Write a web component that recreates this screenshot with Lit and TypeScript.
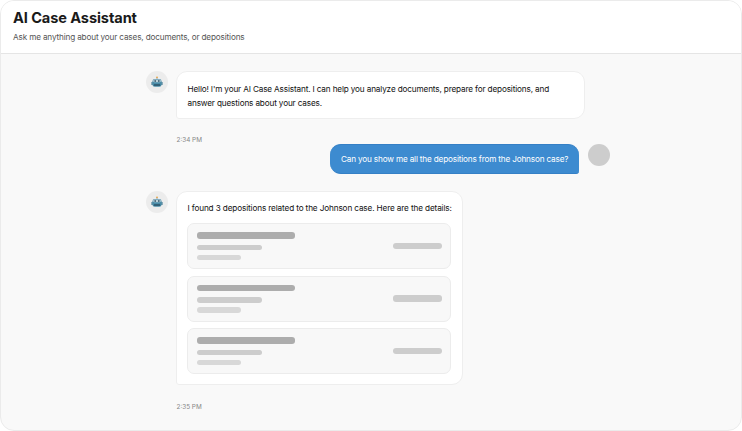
import { LitElement, html, css } from "lit";
import { customElement } from "lit/decorators.js";

@customElement("app-root")
export class AppRoot extends LitElement {
  static styles = css`
    :host { display: block; width: 742px; height: 431px; background: #fff; font-family: Inter, "Liberation Sans", sans-serif; }
    .frame { box-sizing: border-box; width: 742px; height: 431px; border: 1px solid #ebebeb; border-radius: 14px; overflow: hidden; display: flex; flex-direction: column; background: #f9f9f9; }
    .head { box-sizing: border-box; height: 53px; flex: none; background: #fff; border-bottom: 1px solid #e5e5e5; padding: 8px 12px 0; }
    h1 { margin: 0; font-size: 14.6px; line-height: 18px; font-weight: 700; letter-spacing: -0.1px; color: #1a1a1a; }
    .sub { margin: 5px 0 0; font-size: 8.2px; letter-spacing: -0.16px; line-height: 11px; color: #555; }
    .chat { flex: 1; display: flex; flex-direction: column; padding: 17px 131px 0 145px; }
    .row { display: flex; gap: 8px; align-items: flex-start; }
    .row.user { justify-content: flex-end; gap: 9px; }
    .row.next { margin-top: 17px; }
    .av { width: 22px; height: 22px; border-radius: 50%; background: #ececec; flex: none; display: flex; align-items: center; justify-content: center; }
    .av.u { background: #cdcdcd; }
    .av svg { display: block; width: 12px; height: 12px; }
    .bubble { box-sizing: border-box; background: #fff; border: 1px solid #eeeeee; border-radius: 11px 11px 11px 3px; padding: 11px 11px 11px 10px; font-size: 8.2px; letter-spacing: -0.15px; line-height: 13.5px; color: #111; }
    .b1 { width: 409px; height: 48px; padding-left: 10.5px; }
    .b2 { width: 287px; height: 194px; }
    .me { box-sizing: border-box; width: 249px; height: 30px; background: #3d8bd0; color: #fff; border-top: 1px solid #3580c6; border-bottom: 1px solid #3580c6; border-radius: 11px 11px 3px 11px; padding: 0 11px; font-size: 8.2px; letter-spacing: -0.17px; line-height: 28px; white-space: nowrap; }
    .time { margin: 17px 0 0 30.5px; font-size: 6.4px; line-height: 8px; color: #888; }
    .time.last { margin-top: 18px; }
    .lead { line-height: 13px; margin: -1px 0 8px 0.5px; letter-spacing: -0.13px; white-space: nowrap; }
    .cards { display: flex; flex-direction: column; gap: 6.5px; }
    .card { box-sizing: border-box; height: 46px; border: 1px solid #ececec; border-radius: 7px; background: #f8f8f8; padding: 8px 8px 0 9px; display: flex; justify-content: space-between; align-items: center; }
    .lines { display: flex; flex-direction: column; align-self: flex-start; }
    .l { border-radius: 3px; }
    .l1 { width: 98px; height: 6.5px; background: #adadad; }
    .l2 { width: 65px; height: 5.5px; background: #cdcdcd; margin-top: 6px; }
    .l3 { width: 43.5px; height: 5.5px; background: #d8d8d8; margin-top: 4.5px; }
    .r { width: 49px; height: 6.5px; background: #cdcdcd; margin-top: -8px; }
  `;

  robot() {
    return html`<svg viewBox="0 0 12 12" aria-hidden="true">
      <circle cx="6" cy="1.3" r="0.9" fill="#e8a33d"></circle>
      <rect x="5.6" y="1.8" width="0.8" height="1.6" fill="#8a9aa5"></rect>
      <rect x="0.4" y="6" width="1.4" height="3" rx="0.5" fill="#4b7f96"></rect>
      <rect x="10.2" y="6" width="1.4" height="3" rx="0.5" fill="#4b7f96"></rect>
      <rect x="1.4" y="3" width="9.2" height="7.8" rx="2.4" fill="#4a8ca8"></rect>
      <rect x="2.2" y="3.5" width="7.6" height="2.7" rx="1.3" fill="#b9cfd8"></rect>
      <circle cx="4.2" cy="5" r="0.9" fill="#3d5f73"></circle>
      <circle cx="7.8" cy="5" r="0.9" fill="#3d5f73"></circle>
      <rect x="2.8" y="8.2" width="6.4" height="1.6" rx="0.5" fill="#2c5367"></rect>
    </svg>`;
  }

  card() {
    return html`<div class="card">
      <div class="lines"><div class="l l1"></div><div class="l l2"></div><div class="l l3"></div></div>
      <div class="l r"></div>
    </div>`;
  }

  render() {
    return html`<div class="frame">
      <header class="head">
        <h1>AI Case Assistant</h1>
        <p class="sub">Ask me anything about your cases, documents, or depositions</p>
      </header>
      <main class="chat">
        <div class="row">
          <div class="av">${this.robot()}</div>
          <div class="bubble b1">Hello! I'm your AI Case Assistant. I can help you analyze documents, prepare for depositions, and answer questions about your cases.</div>
        </div>
        <div class="time">2:34 PM</div>
        <div class="row user">
          <div class="me">Can you show me all the depositions from the Johnson case?</div>
          <div class="av u"></div>
        </div>
        <div class="row next">
          <div class="av">${this.robot()}</div>
          <div class="bubble b2">
            <div class="lead">I found 3 depositions related to the Johnson case. Here are the details:</div>
            <div class="cards">${this.card()}${this.card()}${this.card()}</div>
          </div>
        </div>
        <div class="time last">2:35 PM</div>
      </main>
    </div>`;
  }
}
